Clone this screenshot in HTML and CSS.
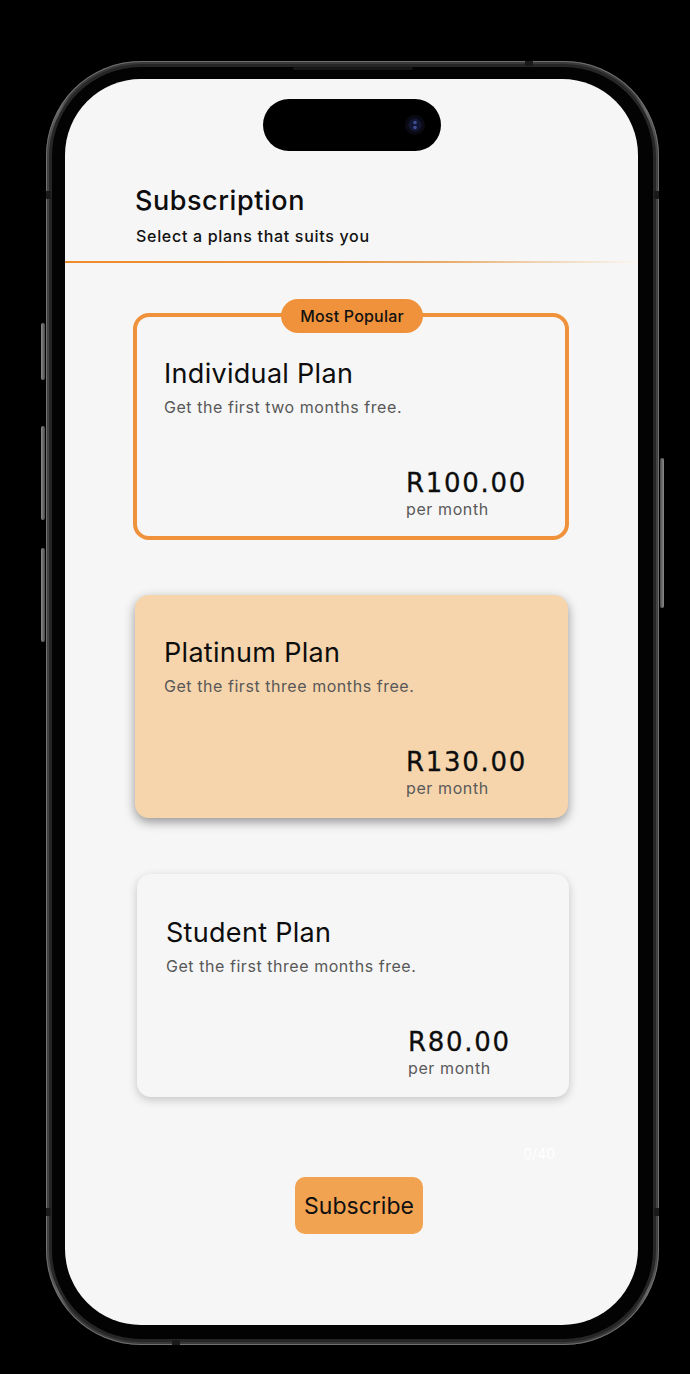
FILE: index.html
```html
<!DOCTYPE html>
<html lang="en">
<head>
<meta charset="utf-8">
<title>Subscription</title>
<link rel="stylesheet" href="styles.css">
</head>
<body>
<div class="stage">
  <div class="phone">
    <span class="btn btn-l1"></span>
    <span class="btn btn-l2"></span>
    <span class="btn btn-l3"></span>
    <span class="btn btn-r1"></span>
    <span class="band band-tl"></span>
    <span class="band band-tr"></span>
    <span class="band band-bl"></span>
    <span class="band band-br"></span>
    <span class="band band-top"></span>
    <span class="band band-bottom"></span>
    <span class="speaker"></span>
    <div class="rim">
      <div class="bezel">
        <div class="screen">
          <div class="island">
            <svg class="camera" width="20" height="20" viewBox="0 0 20 20">
              <circle cx="10" cy="10" r="10" fill="#0a0a14"/>
              <circle cx="10" cy="10" r="6.5" fill="#121833"/>
              <circle cx="10" cy="7.5" r="1.8" fill="#3c4d94"/>
              <circle cx="10" cy="12.5" r="1.8" fill="#3c4d94"/>
            </svg>
          </div>

          <header class="header">
            <h1 class="title">Subscription</h1>
            <p class="subtitle">Select a plans that suits you</p>
          </header>
          <div class="divider"></div>

          <div class="plans">
            <div class="card card-popular">
              <span class="badge">Most Popular</span>
              <h2 class="plan-name">Individual Plan</h2>
              <p class="plan-desc">Get the first two months free.</p>
              <div class="price">
                <div class="amount">R100.00</div>
                <div class="period">per month</div>
              </div>
            </div>

            <div class="card card-selected">
              <h2 class="plan-name">Platinum Plan</h2>
              <p class="plan-desc">Get the first three months free.</p>
              <div class="price">
                <div class="amount">R130.00</div>
                <div class="period">per month</div>
              </div>
            </div>

            <div class="card card-plain">
              <h2 class="plan-name">Student Plan</h2>
              <p class="plan-desc">Get the first three months free.</p>
              <div class="price">
                <div class="amount">R80.00</div>
                <div class="period">per month</div>
              </div>
            </div>
          </div>

          <div class="counter">0/40</div>
          <button class="subscribe">Subscribe</button>
        </div>
      </div>
    </div>
  </div>
</div>
</body>
</html>
```

FILE: styles.css
```css
* { box-sizing: border-box; }

html, body {
  margin: 0;
  padding: 0;
  background: #000;
}

body {
  width: 690px;
  height: 1374px;
  overflow: hidden;
  font-family: Inter, "Noto Sans", sans-serif;
}

.stage {
  padding: 61px 0 0 46px;
}

.phone {
  position: relative;
  width: 613px;
  height: 1284px;
  border-radius: 95px;
  background: linear-gradient(90deg, #3c3c3c 0%, #666 2%, #3a3a3a 4%, #3a3a3a 96%, #666 98%, #3c3c3c 100%);
  padding: 3px;
  box-shadow: inset 0 0 0 1px #707070;
}

.rim {
  height: 100%;
  border-radius: 92px;
  background: #262626;
  padding: 3px;
}

.bezel {
  height: 100%;
  border-radius: 89px;
  background: #030303;
  padding: 12px 15px 14px 13px;
}

.screen {
  position: relative;
  width: 573px;
  height: 1246px;
  border-radius: 76px;
  background: #f6f6f6;
  overflow: hidden;
}

/* frame decorations */
.btn {
  position: absolute;
  width: 4px;
  border-radius: 2px;
  background: linear-gradient(90deg, #8a8a8a, #4a4a4a);
}
.btn-l1 { left: -5px; top: 262px; height: 57px; }
.btn-l2 { left: -5px; top: 365px; height: 94px; }
.btn-l3 { left: -5px; top: 487px; height: 94px; }
.btn-r1 { left: 614px; top: 397px; height: 150px; background: linear-gradient(90deg, #4a4a4a, #8a8a8a); }

.band {
  position: absolute;
  background: #1a1a1a;
}
.band-tl { left: 0; top: 130px; width: 5px; height: 8px; }
.band-tr { right: 0; top: 130px; width: 5px; height: 8px; }
.band-bl { left: 0; top: 1147px; width: 5px; height: 8px; }
.band-br { right: 0; top: 1147px; width: 5px; height: 8px; }
.band-top { left: 479px; top: 0; width: 8px; height: 5px; }
.band-bottom { left: 126px; bottom: 0; width: 8px; height: 5px; }

.speaker {
  position: absolute;
  left: 247px;
  top: 6px;
  width: 120px;
  height: 3px;
  border-radius: 2px;
  background: #161616;
}

.island {
  position: absolute;
  left: 198px;
  top: 20px;
  width: 178px;
  height: 52px;
  border-radius: 26px;
  background: #000;
}
.camera {
  position: absolute;
  left: 142px;
  top: 16px;
}

/* header */
.header {
  padding: 106px 0 0 70px;
}
.title {
  margin: 0;
  font-size: 27px;
  line-height: 32px;
  font-weight: 500;
  letter-spacing: 0.55px;
  color: #0d0d0d;
}
.subtitle {
  margin: 9px 0 0 1px;
  font-size: 16px;
  line-height: 20px;
  font-weight: 500;
  letter-spacing: 0.7px;
  color: #111;
}

.divider {
  margin-top: 15px;
  height: 2px;
  background: linear-gradient(90deg, #ee8c2c 0%, #e9923a 45%, #e8a864 65%, #efd2b0 82%, #fbf6f0 100%);
}

/* cards */
.plans {
  padding-top: 50px;
}

.card {
  position: relative;
  border-radius: 14px;
  padding: 42px 20px 20px 29px;
}

.card-popular {
  margin-left: 68px;
  width: 436px;
  border: 4px solid #f0923b;
  border-radius: 16px;
  padding: 41px 20px 17px 27px;
}

.card-selected {
  margin: 55px 0 0 70px;
  width: 433px;
  background: #f6d5ac;
  box-shadow: 0 4px 11px rgba(0, 0, 0, 0.4);
}

.card-plain {
  margin: 56px 0 0 72px;
  width: 432px;
  background: #f6f6f6;
  padding-top: 43px;
  padding-bottom: 19px;
  box-shadow: 0 3px 10px rgba(0, 0, 0, 0.2);
}

.badge {
  position: absolute;
  left: 144px;
  top: -18px;
  width: 142px;
  height: 34px;
  border-radius: 17px;
  background: #f0923b;
  color: #111;
  font-size: 16px;
  font-weight: 500;
  letter-spacing: 0.2px;
  line-height: 34px;
  text-align: center;
}

.plan-name {
  margin: 0;
  font-size: 27px;
  line-height: 32px;
  font-weight: 400;
  letter-spacing: 0.3px;
  color: #0d0d0d;
}

.plan-desc {
  margin: 7px 0 0;
  font-size: 16px;
  line-height: 20px;
  letter-spacing: 0.55px;
  color: #585858;
}

.price {
  margin: 51px 0 0 242px;
}

.amount {
  font-family: "DejaVu Sans", sans-serif;
  font-size: 26px;
  line-height: 30px;
  letter-spacing: 1.7px;
  -webkit-text-stroke: 0.3px #0d0d0d;
  color: #0d0d0d;
}

.period {
  margin-top: 1px;
  font-size: 16px;
  line-height: 20px;
  letter-spacing: 0.6px;
  color: #5a5a5a;
}

.counter {
  margin-top: 48px;
  padding-right: 83px;
  text-align: right;
  font-size: 14px;
  line-height: 17px;
  color: #fff;
}

.subscribe {
  display: flex;
  align-items: center;
  justify-content: center;
  margin: 15px 0 0 230px;
  width: 128px;
  height: 57px;
  border: 0;
  border-radius: 10px;
  background: #f2a352;
  color: #111;
  font-family: Inter, "Noto Sans", sans-serif;
  font-size: 23px;
  font-weight: 400;
}
```
